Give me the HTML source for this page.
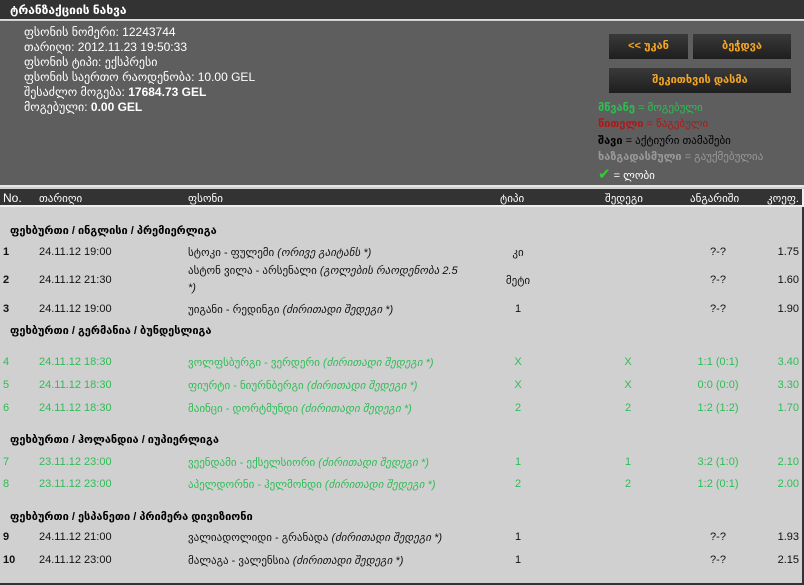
<!DOCTYPE html>
<html><head><meta charset="utf-8"><style>
*{margin:0;padding:0;box-sizing:border-box}
body{width:804px;height:585px;background:#d0d0d0;font-family:"Liberation Sans","DejaVu Sans",sans-serif;position:relative;overflow:hidden}
.a{position:absolute;white-space:nowrap}
#title{left:0;top:0;width:804px;height:20px;background:#333;border-bottom:1px solid #ddd;color:#fff;font-weight:bold;font-size:12px;padding:3px 0 0 10px}
#info{left:0;top:21px;width:804px;height:166px;background:#5e5e5e;border-bottom:2px solid #e6e6e6}
.inf{color:#fff;font-size:12px;left:24px}
.btn{background:linear-gradient(#3a3a3a,#1e1e1e);color:#f5a623;font-weight:bold;font-size:11px;text-align:center;line-height:25px;height:25px}
.lg{left:598px;font-size:11px}
#hdr{left:0;top:189px;width:804px;height:18px;background:#333;color:#fff;font-size:11px;border-bottom:2px solid #eee;border-right:2px solid #eee}
.h{top:3px}
.g{font-weight:bold;font-size:11px;left:10px;color:#000}
.r{font-size:11px;color:#111}
.gr{color:#2ebd55}
i{font-style:italic}
.c{text-align:center;width:60px;margin-left:-30px}
#bot{left:0;top:583px;width:804px;height:2px;background:#333}
</style></head><body>
<div id="title" class="a">ტრანზაქციის ნახვა</div>
<div id="info" class="a">
<div class="a inf" style="top:4px">ფსონის ნომერი: 12243744</div>
<div class="a inf" style="top:19px">თარიღი: 2012.11.23 19:50:33</div>
<div class="a inf" style="top:34px">ფსონის ტიპი: ექსპრესი</div>
<div class="a inf" style="top:49px">ფსონის საერთო რაოდენობა: 10.00 GEL</div>
<div class="a inf" style="top:64px">შესაძლო მოგება: <b>17684.73 GEL</b></div>
<div class="a inf" style="top:79px">მოგებული: <b>0.00 GEL</b></div>
<div class="a btn" style="left:609px;top:13px;width:79px">&lt;&lt; უკან</div>
<div class="a btn" style="left:693px;top:13px;width:98px">ბეჭდვა</div>
<div class="a btn" style="left:609px;top:47px;width:182px">შეკითხვის დასმა</div>
<div class="a lg" style="top:80px;color:#2ebd55"><b>მწვანე</b> = მოგებული</div>
<div class="a lg" style="top:96px;color:#b01818"><b>წითელი</b> = წაგებული</div>
<div class="a lg" style="top:113px;color:#000"><b>შავი</b> = აქტიური თამაშები</div>
<div class="a lg" style="top:129px;color:#999"><b>ხაზგადასმული</b> = გაუქმებულია</div>
<div class="a lg" style="top:144px;color:#fff"><span style="color:#3c3;font-weight:bold;font-size:15px">✔</span> = ლობი</div>
</div>
<div id="hdr" class="a">
<div class="a h" style="left:3px;font-size:12px;top:2px">No.</div>
<div class="a h" style="left:39px">თარიღი</div>
<div class="a h" style="left:188px">ფსონი</div>
<div class="a h" style="left:500px">ტიპი</div>
<div class="a h" style="left:605px">შედეგი</div>
<div class="a h" style="left:690px">ანგარიში</div>
<div class="a h" style="left:767px">კოეფ.</div>
</div>

<div class="a g" style="top:224px">ფეხბურთი / ინგლისი / პრემიერლიგა</div>
<div class="a g" style="top:324px">ფეხბურთი / გერმანია / ბუნდესლიგა</div>
<div class="a g" style="top:433px">ფეხბურთი / ჰოლანდია / იუპიერლიგა</div>
<div class="a g" style="top:510px">ფეხბურთი / ესპანეთი / პრიმერა დივიზიონი</div>

<div class="a r" style="top:246px;left:3px"><b>1</b></div><div class="a r" style="top:246px;left:39px">24.11.12 19:00</div><div class="a r" style="top:246px;left:188px">სტოკი - ფულემი <i>(ორივე გაიტანს *)</i></div><div class="a r c" style="top:246px;left:518px">კი</div><div class="a r c" style="top:246px;left:718px">?-?</div><div class="a r" style="top:246px;right:5px">1.75</div>

<div class="a r" style="top:263px;left:188px;white-space:normal;width:278px;line-height:17px">ასტონ ვილა - არსენალი <i>(გოლების რაოდენობა 2.5 *)</i></div>
<div class="a r" style="top:274px;left:3px"><b>2</b></div><div class="a r" style="top:274px;left:39px">24.11.12 21:30</div><div class="a r c" style="top:274px;left:518px">მეტი</div><div class="a r c" style="top:274px;left:718px">?-?</div><div class="a r" style="top:274px;right:5px">1.60</div>

<div class="a r" style="top:303px;left:3px"><b>3</b></div><div class="a r" style="top:303px;left:39px">24.11.12 19:00</div><div class="a r" style="top:303px;left:188px">უიგანი - რედინგი <i>(ძირითადი შედეგი *)</i></div><div class="a r c" style="top:303px;left:518px">1</div><div class="a r c" style="top:303px;left:718px">?-?</div><div class="a r" style="top:303px;right:5px">1.90</div>

<div class="a r gr" style="top:356px;left:3px">4</div><div class="a r gr" style="top:356px;left:39px">24.11.12 18:30</div><div class="a r gr" style="top:356px;left:188px">ვოლფსბურგი - ვერდერი <i>(ძირითადი შედეგი *)</i></div><div class="a r gr c" style="top:356px;left:518px">X</div><div class="a r gr c" style="top:356px;left:628px">X</div><div class="a r gr c" style="top:356px;left:718px">1:1 (0:1)</div><div class="a r gr" style="top:356px;right:5px">3.40</div>

<div class="a r gr" style="top:379px;left:3px">5</div><div class="a r gr" style="top:379px;left:39px">24.11.12 18:30</div><div class="a r gr" style="top:379px;left:188px">ფიურტი - ნიურნბერგი <i>(ძირითადი შედეგი *)</i></div><div class="a r gr c" style="top:379px;left:518px">X</div><div class="a r gr c" style="top:379px;left:628px">X</div><div class="a r gr c" style="top:379px;left:718px">0:0 (0:0)</div><div class="a r gr" style="top:379px;right:5px">3.30</div>

<div class="a r gr" style="top:402px;left:3px">6</div><div class="a r gr" style="top:402px;left:39px">24.11.12 18:30</div><div class="a r gr" style="top:402px;left:188px">მაინცი - დორტმუნდი <i>(ძირითადი შედეგი *)</i></div><div class="a r gr c" style="top:402px;left:518px">2</div><div class="a r gr c" style="top:402px;left:628px">2</div><div class="a r gr c" style="top:402px;left:718px">1:2 (1:2)</div><div class="a r gr" style="top:402px;right:5px">1.70</div>

<div class="a r gr" style="top:456px;left:3px">7</div><div class="a r gr" style="top:456px;left:39px">23.11.12 23:00</div><div class="a r gr" style="top:456px;left:188px">ვეენდამი - ექსელსიორი <i>(ძირითადი შედეგი *)</i></div><div class="a r gr c" style="top:456px;left:518px">1</div><div class="a r gr c" style="top:456px;left:628px">1</div><div class="a r gr c" style="top:456px;left:718px">3:2 (1:0)</div><div class="a r gr" style="top:456px;right:5px">2.10</div>

<div class="a r gr" style="top:478px;left:3px">8</div><div class="a r gr" style="top:478px;left:39px">23.11.12 23:00</div><div class="a r gr" style="top:478px;left:188px">აპელდორნი - ჰელმონდი <i>(ძირითადი შედეგი *)</i></div><div class="a r gr c" style="top:478px;left:518px">2</div><div class="a r gr c" style="top:478px;left:628px">2</div><div class="a r gr c" style="top:478px;left:718px">1:2 (0:1)</div><div class="a r gr" style="top:478px;right:5px">2.00</div>

<div class="a r" style="top:531px;left:3px"><b>9</b></div><div class="a r" style="top:531px;left:39px">24.11.12 21:00</div><div class="a r" style="top:531px;left:188px">ვალიადოლიდი - გრანადა <i>(ძირითადი შედეგი *)</i></div><div class="a r c" style="top:531px;left:518px">1</div><div class="a r c" style="top:531px;left:718px">?-?</div><div class="a r" style="top:531px;right:5px">1.93</div>

<div class="a r" style="top:554px;left:3px"><b>10</b></div><div class="a r" style="top:554px;left:39px">24.11.12 23:00</div><div class="a r" style="top:554px;left:188px">მალაგა - ვალენსია <i>(ძირითადი შედეგი *)</i></div><div class="a r c" style="top:554px;left:518px">1</div><div class="a r c" style="top:554px;left:718px">?-?</div><div class="a r" style="top:554px;right:5px">2.15</div>

<div id="bot" class="a"></div>
<div class="a" style="right:0;top:207px;width:2px;height:378px;background:#333"></div>
</body></html>
